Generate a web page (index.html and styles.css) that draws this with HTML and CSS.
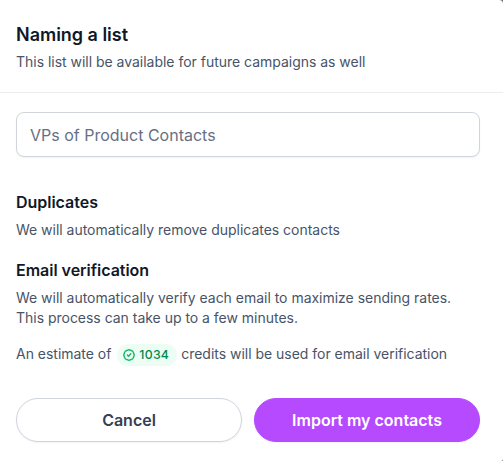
FILE: index.html
```
<!DOCTYPE html>
<html lang="en">
<head>
  <meta charset="UTF-8" />
  <title>Naming a list</title>
  <link rel="stylesheet" href="styles.css">
</head>
<body>

<div class="modal">
  <div class="modal-header">
    <h2>Naming a list</h2>
    <p>This list will be available for future campaigns as well</p>
  </div>

  <form class="modal-body">
    <input type="text" class="list-name" placeholder="VPs of Product Contacts" aria-label="List name">

    <div class="info">
      <h3>Duplicates</h3>
      <p>We will automatically remove duplicates contacts</p>
    </div>

    <div class="info">
      <h3>Email verification</h3>
      <p>We will automatically verify each email to maximize sending rates.<br>This process can take up to a few minutes.</p>
    </div>

    <div class="estimate">
      <span>An estimate of</span>
      <span class="badge">
        <svg width="12" height="12" viewBox="0 0 12 12" fill="none" stroke="currentColor" stroke-width="1.4" stroke-linecap="round" stroke-linejoin="round">
          <path d="M6 .8C7 .8 7.300 1.300 8.200 1.500C9.200 1.700 10.200 2.300 10.400 3.500C10.600 4.500 11.200 5 11.200 6S10.600 7.500 10.400 8.500C10.200 9.700 9.200 10.300 8.200 10.500C7.300 10.700 7 11.200 6 11.200S4.700 10.700 3.800 10.500C2.800 10.300 1.800 9.700 1.600 8.500C1.400 7.500.8 7 .8 6S1.400 4.500 1.600 3.500C1.800 2.300 2.800 1.700 3.800 1.500C4.700 1.300 5 .8 6 .8z"/>
          <path d="M4.300 6.100l1.200 1.200 2.300-2.500"/>
        </svg>
        1034
      </span>
      <span>credits will be used for email verification</span>
    </div>

    <div class="actions">
      <button type="button" class="btn btn-cancel">Cancel</button>
      <button type="submit" class="btn btn-primary">Import my contacts</button>
    </div>
  </form>
</div>

</body>
</html>
```

FILE: styles.css
```
* {
  box-sizing: border-box;
}

body {
  margin: 0;
  background: #70707b;
  color: #475467;
  font-family: Inter, sans-serif;
  font-size: 14px;
  line-height: 20px;
  letter-spacing: -0.02px;
}

h2, h3, p {
  margin: 0;
}

.modal {
  height: 461px;
  background: #fff;
  border-radius: 0 4px 2px 0;
}

.modal-header {
  padding: 20px 16px;
  border-bottom: 1px solid #eaecf0;
}

.modal-header h2 {
  color: #101828;
  font-size: 18px;
  font-weight: 600;
  line-height: 30px;
  margin-bottom: 2px;
}

.modal-body {
  padding: 19px 23px 0 16px;
}

.list-name {
  display: block;
  width: 100%;
  height: 45px;
  padding: 0 13px;
  border: 1px solid #d0d5dd;
  border-radius: 8px;
  box-shadow: 0 1px 2px rgba(16, 24, 40, 0.05);
  font-family: inherit;
  font-size: 16px;
  margin-bottom: 33px;
}

.list-name::placeholder {
  color: #667085;
}

.info {
  margin-bottom: 18px;
}

.info h3 {
  color: #101828;
  font-size: 16px;
  font-weight: 600;
  line-height: 24px;
  margin-bottom: 6px;
}

.estimate {
  display: flex;
  align-items: center;
  gap: 4px;
  height: 20px;
  margin-top: -2px;
}

.badge {
  display: flex;
  align-items: center;
  gap: 4px;
  height: 22px;
  margin: 2px 0 0 2px;
  padding: 0 8px 0 6px;
  border-radius: 11px;
  background: #ecfdf3;
  color: #07864b;
  font-size: 12.3px;
  font-weight: 500;
  letter-spacing: 0.25px;
}

.badge svg {
  color: #12b76a;
}

.actions {
  display: flex;
  gap: 12px;
  margin-top: 34px;
}

.btn {
  flex: 1;
  height: 44px;
  border: 1px solid #d0d5dd;
  border-radius: 22px;
  box-shadow: 0 1px 2px rgba(16, 24, 40, 0.05);
  background: #fff;
  color: #344054;
  font-family: inherit;
  font-size: 16px;
  font-weight: 600;
}

.btn-primary {
  border-color: #b54aff;
  background: #b54aff;
  color: #fff;
}
```
